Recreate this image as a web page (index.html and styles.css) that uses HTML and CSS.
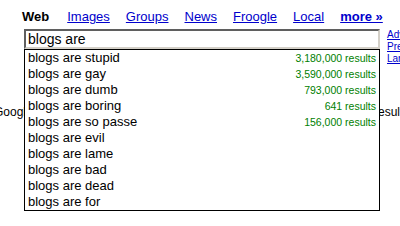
FILE: index.html
```html
<!DOCTYPE html>
<html lang="en">
<head>
    <meta charset="UTF-8">
    <title>Google Suggest</title>
    <link rel="stylesheet" href="styles.css">
</head>
<body>
    <div class="tabs">
        <b class="current">Web</b>
        <a href="#">Images</a>
        <a href="#">Groups</a>
        <a href="#">News</a>
        <a href="#">Froogle</a>
        <a href="#">Local</a>
        <a href="#" class="more">more &raquo;</a>
    </div>

    <div class="search">
        <div class="field">
            <input type="text" class="query" value="blogs are">
            <ul class="suggest">
                <li><span>blogs are stupid</span><span class="count">3,180,000 results</span></li>
                <li><span>blogs are gay</span><span class="count">3,590,000 results</span></li>
                <li><span>blogs are dumb</span><span class="count">793,000 results</span></li>
                <li><span>blogs are boring</span><span class="count">641 results</span></li>
                <li><span>blogs are so passe</span><span class="count">156,000 results</span></li>
                <li><span>blogs are evil</span></li>
                <li><span>blogs are lame</span></li>
                <li><span>blogs are bad</span></li>
                <li><span>blogs are dead</span></li>
                <li><span>blogs are for</span></li>
            </ul>
        </div>
        <div class="side">
            <a href="#">Advanced Search</a>
            <a href="#">Preferences</a>
            <a href="#">Language Tools</a>
        </div>
    </div>

    <p class="note"><span class="lead">Google Suggest</span><span>results</span></p>
</body>
</html>
```

FILE: styles.css
```css
html {
    overflow: hidden;
}
body {
    margin: 0;
    min-height: 226px;
    font-family: "Liberation Sans", Arial, sans-serif;
    background: #fff;
    color: #000;
}
a {
    color: #0000cc;
}

.tabs {
    display: flex;
    gap: 16px;
    padding: 9px 0 0 22px;
    font-size: 13px;
    line-height: 15px;
    white-space: nowrap;
}
.tabs .current {
    margin-right: 2px;
}
.tabs .more {
    font-weight: bold;
}

.search {
    display: flex;
    align-items: flex-start;
    margin-top: 5px;
    padding-left: 24px;
}
.field {
    position: relative;
    width: 356px;
    flex: none;
}
.query {
    display: block;
    box-sizing: border-box;
    width: 356px;
    height: 20px;
    margin: 0;
    padding: 0 2px;
    border-width: 2px;
    border-style: solid;
    border-color: #5f5f5f #d4d0c8 #d4d0c8 #5f5f5f;
    font-family: "Liberation Sans", Arial, sans-serif;
    font-size: 14px;
    color: #000;
    outline: none;
}
.suggest {
    position: absolute;
    top: 100%;
    left: 0;
    width: 356px;
    box-sizing: border-box;
    margin: 0;
    padding: 0;
    list-style: none;
    background: #fff;
    border: 1px solid #000;
    z-index: 10;
}
.suggest li {
    display: flex;
    justify-content: space-between;
    align-items: baseline;
    height: 16px;
    padding: 0 3px;
    font-size: 13px;
    line-height: 16px;
}
.suggest .count {
    font-size: 10.5px;
    color: #008000;
}

.side {
    margin-left: 7px;
    font-size: 10px;
    line-height: 12px;
    white-space: nowrap;
}
.side a {
    display: block;
}

.note {
    display: flex;
    margin: 40px 0 0 -6px;
    font-size: 12px;
    line-height: 14px;
    white-space: nowrap;
}
.note .lead {
    flex: none;
    width: 380px;
}
```
